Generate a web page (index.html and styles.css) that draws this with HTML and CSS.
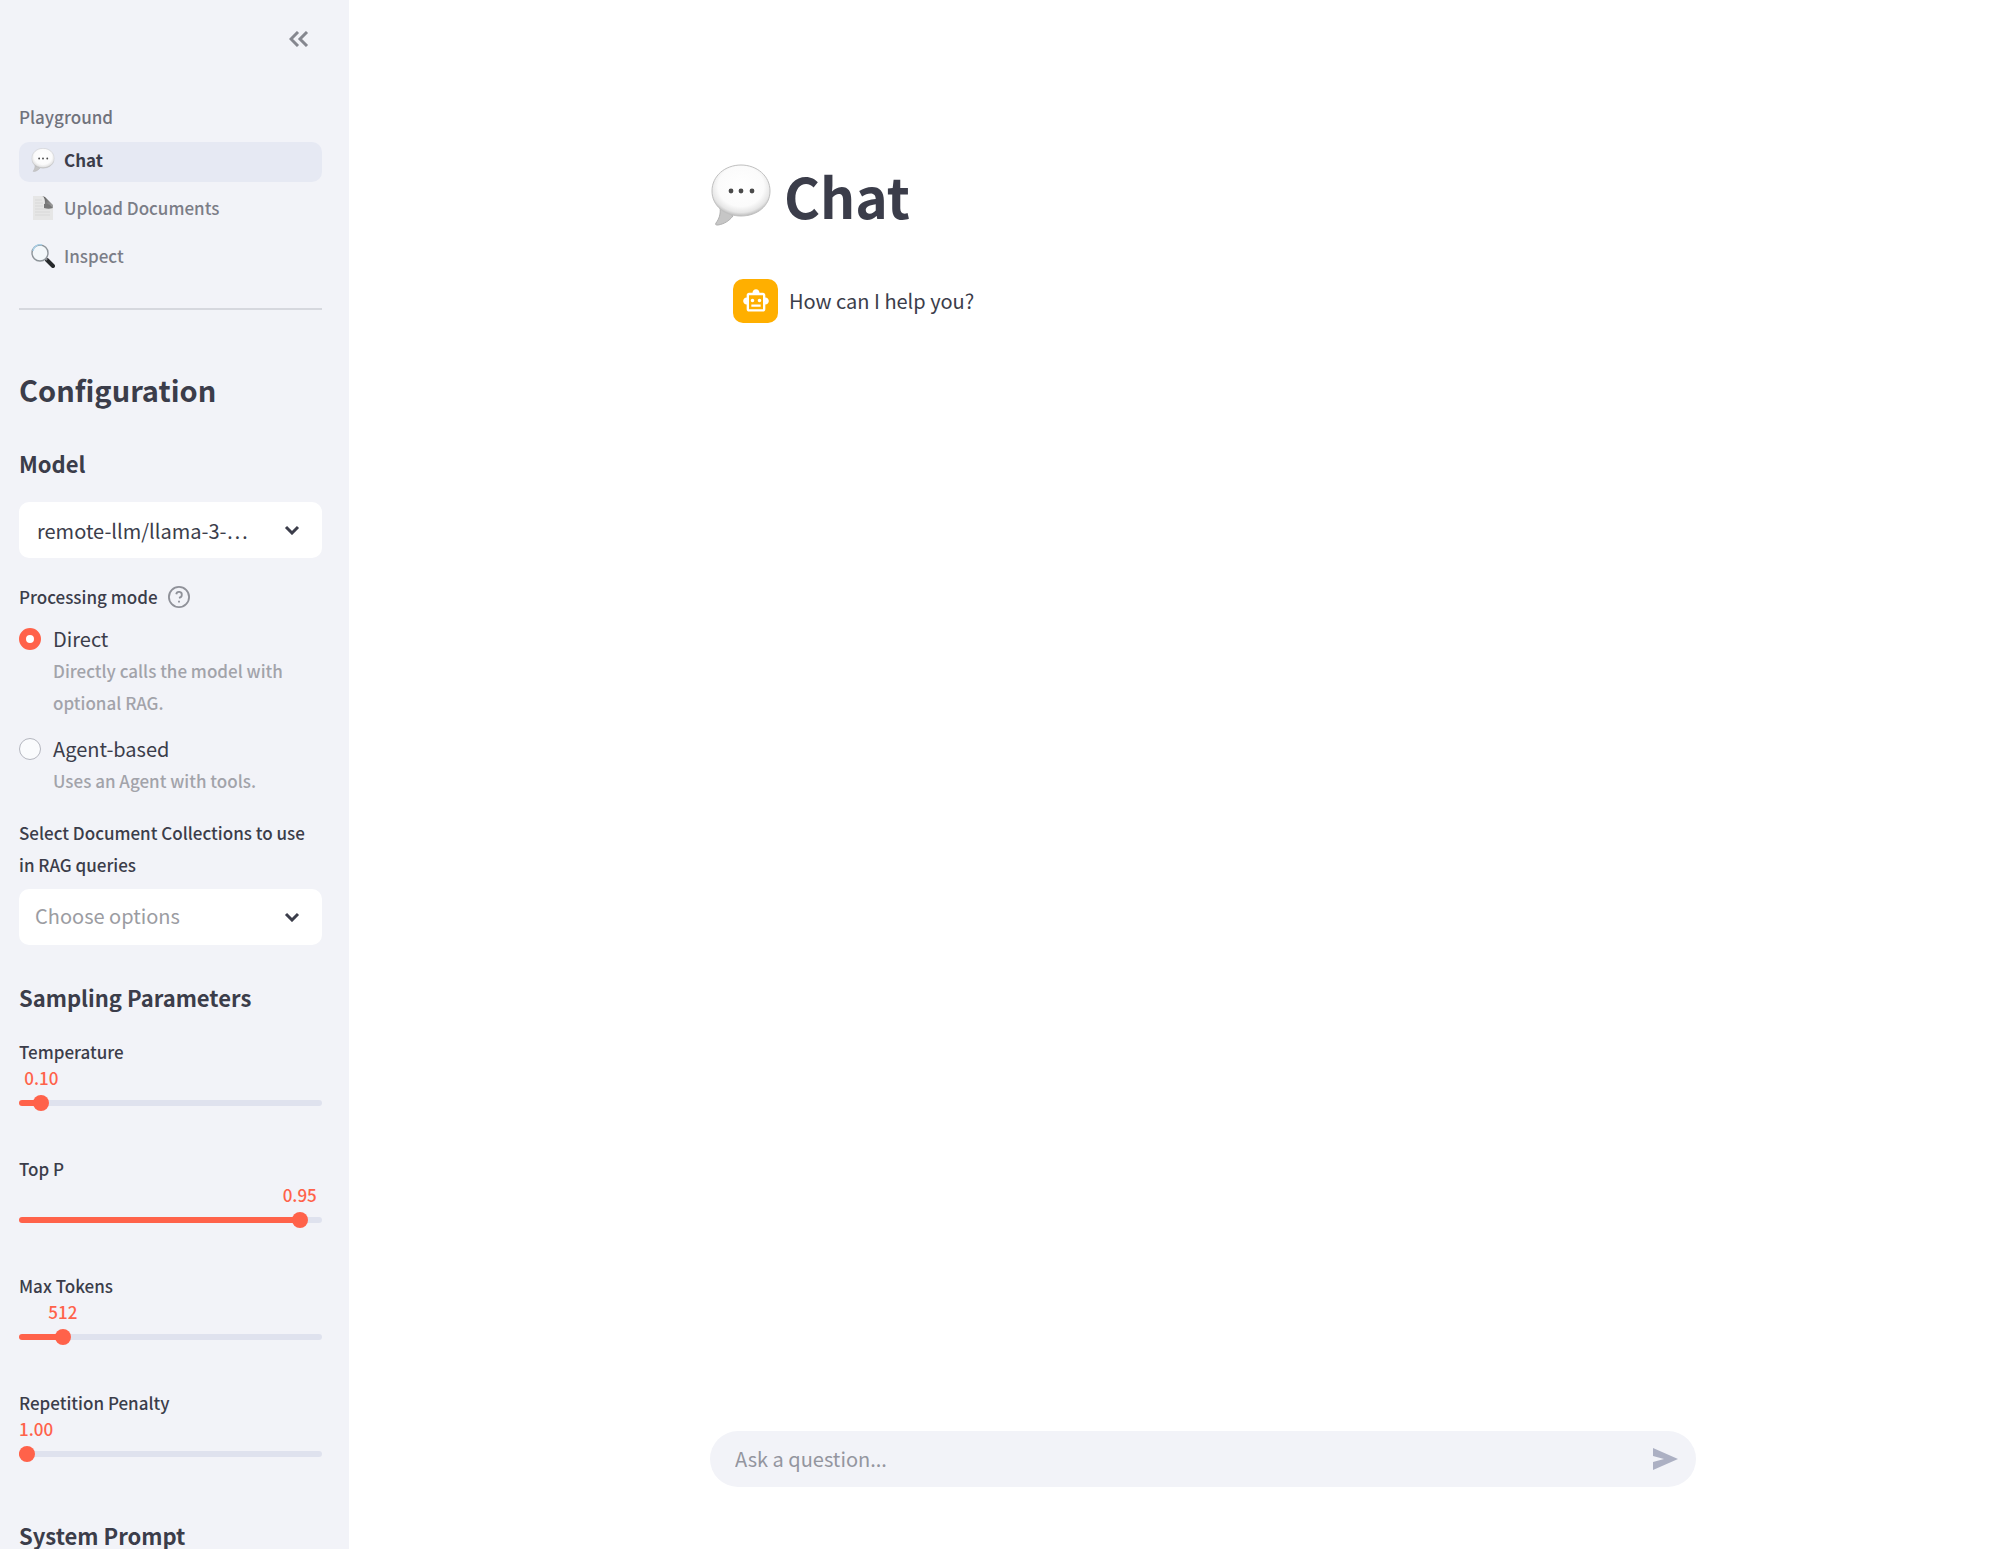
FILE: index.html
```html
<!DOCTYPE html>
<html lang="en">
<head>
<meta charset="utf-8">
<meta name="viewport" content="width=device-width, initial-scale=1">
<title>Chat</title>
<link rel="stylesheet" href="styles.css">
</head>
<body>
<svg class="defs" aria-hidden="true">
  <defs>
    <radialGradient id="bubble-fill" cx="50%" cy="42%" r="58%">
      <stop offset="0" stop-color="#ffffff"/>
      <stop offset="0.68" stop-color="#fbfbfb"/>
      <stop offset="0.88" stop-color="#e6e6e6"/>
      <stop offset="1" stop-color="#bcbcbc"/>
    </radialGradient>
    <linearGradient id="fold-fill" x1="0" y1="0" x2="1" y2="1">
      <stop offset="0" stop-color="#555555"/>
      <stop offset="1" stop-color="#a8a8a8"/>
    </linearGradient>
    <symbol id="bubble" viewBox="0 0 60 62">
      <path d="M9 43C10 50 8 55 5 59c-1 2 0 2 2 2 6-1 11-4 15-9Z" fill="#c6c6c6" stroke="#b0b0b0"/>
      <path d="M30 1C46 1 59 12 59 27S46 52 30 52 1 42 1 27 14 1 30 1Z" fill="url(#bubble-fill)" stroke="#c0c0c0"/>
      <circle cx="20" cy="27" r="2.4" fill="#4a4a4a"/>
      <circle cx="30" cy="27" r="2.4" fill="#4a4a4a"/>
      <circle cx="41" cy="27" r="2.4" fill="#4a4a4a"/>
    </symbol>
  </defs>
</svg>
<div class="app">
  <aside class="sidebar">
    <div class="sidebar-header">
      <button class="collapse" type="button" aria-label="Collapse sidebar">
        <svg width="20" height="16" viewBox="0 0 20 16" fill="none" stroke="#85878f" stroke-width="3"><path d="M9 1 2 8l7 7M18 1l-7 7 7 7"/></svg>
      </button>
    </div>
    <nav class="nav" aria-label="Playground">
      <p class="nav-title">Playground</p>
      <a class="nav-item active" href="#chat" aria-current="page">
        <svg class="nav-icon" viewBox="0 0 60 62"><use href="#bubble"/></svg>
        Chat
      </a>
      <a class="nav-item" href="#upload">
        <svg class="nav-icon" viewBox="0 0 24 24">
          <path d="M2 0h11l9 10v14H2z" fill="#e6e6e6"/>
          <path d="M4 4h7M4 7h8M4 10h8M4 13h15M4 16h15M4 19h15" stroke="#d8d8d8"/>
          <path d="M11 0c3 1 3 5 3 8 3 0 6 1 8 4V9L14 1z" fill="url(#fold-fill)"/>
          <path d="M13 8c3-1 7 0 9 4-3 1-6 1-9 0z" fill="#777777"/>
        </svg>
        Upload Documents
      </a>
      <a class="nav-item" href="#inspect">
        <svg class="nav-icon" viewBox="0 0 24 24">
          <path d="m16 16 6 6" stroke="#26282b" stroke-width="4" stroke-linecap="round"/>
          <path d="m14 14 2 2" stroke="#8a8d90" stroke-width="2"/>
          <circle cx="9" cy="9" r="8" fill="#f3f7fa" stroke="#8d9499" stroke-width="1.4"/>
          <path d="M2 7a7 7 0 0 1 9-6" fill="none" stroke="#a9d0e8" stroke-width="1.4"/>
        </svg>
        Inspect
      </a>
    </nav>
    <hr class="divider">

    <h2 class="title">Configuration</h2>
    <h3 class="section">Model</h3>
    <div class="select">
      <select class="select-field" aria-label="Model">
        <option>remote-llm/llama-3-…</option>
      </select>
      <svg class="chevron" viewBox="0 0 16 10"><path d="m2 2 6 6 6-6"/></svg>
    </div>

    <fieldset class="modes">
      <legend class="modes-legend">
        Processing mode
        <svg class="help" viewBox="0 0 24 24" fill="none" stroke="#8f9199" stroke-width="2"><circle cx="12" cy="12" r="11"/><path d="M9 9a3 3 0 0 1 6 1c0 2-3 3-3 3M12 16v2"/></svg>
      </legend>
      <label class="mode">
        <input class="radio" type="radio" name="mode" checked>
        <span class="mode-name">Direct</span>
        <span class="mode-text">Directly calls the model with optional RAG.</span>
      </label>
      <label class="mode">
        <input class="radio" type="radio" name="mode">
        <span class="mode-name">Agent-based</span>
        <span class="mode-text">Uses an Agent with tools.</span>
      </label>
    </fieldset>

    <label class="field-label" for="collections">Select Document Collections to use in RAG queries</label>
    <div class="select">
      <select class="select-field empty" id="collections">
        <option>Choose options</option>
      </select>
      <svg class="chevron" viewBox="0 0 16 10"><path d="m2 2 6 6 6-6"/></svg>
    </div>

    <h3 class="section">Sampling Parameters</h3>
    <div class="sliders">
      <div class="slider" style="--fill: 0.05">
        <label class="slider-label" for="temperature">Temperature</label>
        <output class="slider-value" for="temperature">0.10</output>
        <input class="range" id="temperature" type="range" min="0" max="2" step="0.05" value="0.1">
      </div>
      <div class="slider" style="--fill: 0.95">
        <label class="slider-label" for="top-p">Top P</label>
        <output class="slider-value" for="top-p">0.95</output>
        <input class="range" id="top-p" type="range" min="0" max="1" step="0.05" value="0.95">
      </div>
      <div class="slider" style="--fill: 0.125">
        <label class="slider-label" for="max-tokens">Max Tokens</label>
        <output class="slider-value" for="max-tokens">512</output>
        <input class="range" id="max-tokens" type="range" min="0" max="4096" step="64" value="512">
      </div>
      <div class="slider" style="--fill: 0">
        <label class="slider-label" for="penalty">Repetition Penalty</label>
        <output class="slider-value" for="penalty">1.00</output>
        <input class="range" id="penalty" type="range" min="1" max="2" step="0.05" value="1">
      </div>
    </div>
    <h3 class="section prompt">System Prompt</h3>
  </aside>

  <main class="main">
    <div class="column">
      <h1 class="heading">
        <svg class="heading-icon" viewBox="0 0 60 62"><use href="#bubble"/></svg>
        Chat
      </h1>
      <div class="message">
        <span class="avatar">
          <svg width="28" height="28" viewBox="0 0 24 24" fill="#ffffff"><path d="M20 9V7c0-1.1-.9-2-2-2h-3c0-1.66-1.34-3-3-3S9 3.34 9 5H6c-1.1 0-2 .9-2 2v2c-1.66 0-3 1.34-3 3s1.34 3 3 3v4c0 1.1.9 2 2 2h12c1.1 0 2-.9 2-2v-4c1.66 0 3-1.34 3-3s-1.34-3-3-3zm-2 10H6V7h12v12zm-9-6c-.83 0-1.5-.67-1.5-1.5S8.17 10 9 10s1.5.67 1.5 1.5S9.83 13 9 13zm7.5-1.5c0 .83-.67 1.5-1.5 1.5s-1.5-.67-1.5-1.5.67-1.5 1.5-1.5 1.5.67 1.5 1.5zM8 15h8v2H8v-2z"/></svg>
        </span>
        <p class="message-text">How can I help you?</p>
      </div>
      <form class="ask">
        <input class="ask-field" type="text" placeholder="Ask a question..." aria-label="Ask a question">
        <button class="send" type="button" aria-label="Send">
          <svg width="26" height="22" viewBox="0 0 26 22" fill="#acb0c3"><path d="M1 0 26 11 1 22v-8l11-3L1 8z"/></svg>
        </button>
      </form>
    </div>
  </main>
</div>
</body>
</html>
```
FILE: styles.css
```css
* { box-sizing: border-box; }

body {
  margin: 0;
  background: #ffffff;
  color: #3b3d4a;
  font-family: "Noto Sans CJK KR", "Noto Sans", sans-serif;
  font-size: 17px;
  line-height: 32px;
}

h1, h2, h3, p { margin: 0; }
input, select, button { font: inherit; color: inherit; }

.defs { position: absolute; width: 0; height: 0; }

.app {
  display: flex;
  height: 100vh;
  padding-bottom: 2px;
}

/* Sidebar */
.sidebar {
  flex: none;
  width: 349px;
  padding: 0 27px 0 19px;
  background: #f2f3f8;
  font-weight: 500;
  overflow-y: auto;
  scrollbar-width: none;
}

.sidebar-header {
  display: flex;
  justify-content: flex-end;
  height: 103px;
  padding-top: 16px;
}

.collapse {
  display: grid;
  place-items: center;
  width: 46px;
  height: 46px;
  padding: 0;
  border: 0;
  background: none;
}

.nav {
  display: flex;
  flex-direction: column;
  gap: 8px;
}

.nav-title {
  margin-bottom: 3px;
  line-height: 28px;
  color: #70727c;
}

.nav-item {
  display: flex;
  align-items: center;
  gap: 9px;
  height: 40px;
  padding: 0 12px 4px;
  border-radius: 10px;
  color: #7b7d87;
  text-decoration: none;
}

.nav-item.active {
  background: #e6e9f3;
  color: #3b3d4a;
  font-weight: 700;
}

.nav-icon { width: 24px; height: 24px; }

.divider {
  height: 2px;
  margin: 30px 0 59px;
  border: 0;
  background: #d6d8de;
}

.title {
  margin-bottom: 38px;
  font-size: 29px;
  line-height: 40px;
}

.section {
  margin: 36px 0 23px;
  font-size: 22px;
  line-height: 32px;
}

.select { display: grid; align-items: center; }

.select-field {
  grid-area: 1 / 1;
  width: 100%;
  height: 56px;
  padding: 2px 56px 0 18px;
  border: 0;
  border-radius: 10px;
  appearance: none;
  background: #ffffff;
  font-size: 20px;
  font-weight: 400;
}

.select-field.empty {
  padding: 0 56px 2px 16px;
  color: #9b9ca2;
}

.chevron {
  grid-area: 1 / 1;
  justify-self: end;
  width: 16px;
  height: 10px;
  margin-right: 22px;
  fill: none;
  stroke: #3b3d4a;
  stroke-width: 3;
  pointer-events: none;
}

.modes {
  display: grid;
  gap: 14px;
  margin: 23px 0 20px;
  padding: 0;
  border: 0;
}

.modes-legend {
  display: flex;
  align-items: center;
  gap: 10px;
  margin-bottom: 10px;
  padding: 0;
}

.help { width: 22px; height: 22px; }

.mode {
  display: grid;
  grid-template-columns: 22px 1fr;
  column-gap: 12px;
  align-items: center;
}

.radio {
  width: 22px;
  height: 22px;
  margin: 0;
  border: 1px solid #b4b6bf;
  border-radius: 50%;
  appearance: none;
  background: #fafbfd;
}

.radio:checked {
  border: 7px solid #ff624a;
  background: #ffffff;
}

.mode-name {
  font-size: 20px;
  font-weight: 400;
}

.mode-text { grid-column: 2; color: #a2a3aa; }

.field-label {
  display: block;
  margin-bottom: 8px;
  padding-right: 10px;
}

.sliders {
  display: grid;
  gap: 43px;
  margin-top: 27px;
}

.slider { display: flex; flex-direction: column; }
.slider-label { line-height: 24px; }

.slider-value {
  width: 34px;
  margin-left: max(0px, calc((100% - 16px) * var(--fill) - 9px));
  color: #ff624a;
  line-height: 28px;
  text-align: center;
}

.range {
  --stop: calc(8px + (100% - 16px) * var(--fill));
  width: 100%;
  height: 22px;
  margin: 0;
  appearance: none;
  background: none;
}

.range::-webkit-slider-runnable-track {
  height: 6px;
  border-radius: 3px;
  background: linear-gradient(to right, #ff624a var(--stop), #dfe2ee var(--stop));
}

.range::-webkit-slider-thumb {
  width: 16px;
  height: 16px;
  margin-top: -5px;
  border-radius: 50%;
  appearance: none;
  background: #ff624a;
}

.section.prompt {
  margin: 57px 0 0;
  line-height: 26px;
}

/* Chat */
.main {
  flex: 1;
  display: flex;
  justify-content: center;
  padding-left: 58px;
}

.column {
  display: flex;
  flex-direction: column;
  width: 100%;
  max-width: 986px;
  padding: 159px 0 62px;
}

.heading {
  display: flex;
  align-items: center;
  gap: 12px;
  font-size: 55px;
  font-weight: 700;
  line-height: 72px;
}

.heading-icon { width: 62px; height: 62px; }

.message {
  display: flex;
  align-items: center;
  gap: 11px;
  margin-top: 48px;
  padding-left: 23px;
}

.avatar {
  display: grid;
  place-items: center;
  width: 45px;
  height: 44px;
  border-radius: 10px;
  background: #ffaf00;
}

.message-text { font-size: 20px; }

.ask {
  display: flex;
  align-items: center;
  height: 56px;
  margin-top: auto;
  padding: 0 18px 0 25px;
  border-radius: 28px;
  background: #f2f3f8;
}

.ask-field {
  flex: 1;
  min-width: 0;
  padding: 0;
  border: 0;
  outline: 0;
  background: none;
  font-size: 20px;
}

.ask-field::placeholder { color: #94969f; }

.send {
  display: grid;
  padding: 0;
  border: 0;
  background: none;
}
```
